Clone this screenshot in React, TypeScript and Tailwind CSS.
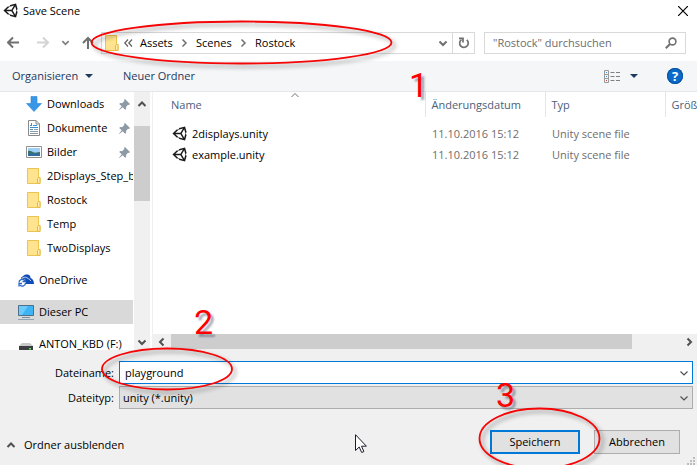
import type { ReactNode } from "react";

type IconProps = { className?: string };

function UnityIcon({ className }: IconProps) {
  return (
    <svg viewBox="0 0 512 512" className={className} fill="#1a1a1a" aria-hidden="true">
      <path d="M498.11 206.4L445.31 14.72 248.2 66.08 219 116.14l-59.2-.43L15.54 256 159.82 396.32l59.17-.43 29.24 50 197.08 51.36 52.8-191.62-30-49.63zM223.77 124.2L374.55 86.51 288 232.33H114.87zm0 263.63L114.87 279.71H288l86.55 145.81zm193 14L330.17 256l86.58-145.84L458.56 256z" />
    </svg>
  );
}

type Direction = "up" | "down" | "left" | "right";

const chevronPaths: Record<Direction, string> = {
  up: "M1.5 7 5 3.5 8.5 7",
  down: "M1.5 3.5 5 7 8.5 3.5",
  left: "M6.5 1.5 3 5 6.5 8.5",
  right: "M3.5 1.5 7 5 3.5 8.5",
};

function Chevron({ dir, size = 10, color = "#505050", weight = 2 }: { dir: Direction; size?: number; color?: string; weight?: number }) {
  return (
    <svg viewBox="0 0 10 10" width={size} height={size} fill="none" stroke={color} strokeWidth={weight} className="shrink-0" aria-hidden="true">
      <path d={chevronPaths[dir]} />
    </svg>
  );
}

function Arrow({ dir, color }: { dir: "left" | "right" | "up"; color: string }) {
  const d = {
    left: "M12 6.5H1M6 1.5 1 6.5l5 5",
    right: "M0 6.5h11M6 1.5l5 5-5 5",
    up: "M6 13V2M1 7l5-5 5 5",
  }[dir];
  return (
    <svg viewBox="0 0 12 13" width="12" height="13" fill="none" stroke={color} strokeWidth="2" aria-hidden="true">
      <path d={d} />
    </svg>
  );
}

function FolderIcon() {
  return (
    <svg viewBox="0 0 14 16" width="14" height="16" className="shrink-0" aria-hidden="true">
      <path d="M.5.5h11v9h1.500v6H.5z" fill="#ffe38f" stroke="#ecc44c" />
      <path d="M10.500 15.500v-5l1-1h1.500v6z" fill="#ffe9a6" stroke="#e8b93c" />
    </svg>
  );
}

function DownloadIcon() {
  return (
    <svg viewBox="0 0 16 16" width="16" height="16" aria-hidden="true">
      <path d="M5 .5h6v7h4.500L8 15.500.5 7.500H5z" fill="#3a97e8" stroke="#2a83d6" strokeWidth=".6" />
    </svg>
  );
}

function DocumentIcon() {
  return (
    <svg viewBox="0 0 14 16" width="14" height="16" aria-hidden="true">
      <path d="M1.500.5h7.500l3.500 3.500v11.500h-11z" fill="#fff" stroke="#8a8a8a" />
      <path d="M9 .5V4h3.500" fill="none" stroke="#8a8a8a" />
      <path d="M3 5.500h2M4.500 3v3M6 5.500h4M3 7.500h8M3 9.500h3" stroke="#3a8fd0" />
      <path d="M7 9.500h4M3 11.500h8M3 13.500h8" stroke="#8c9aa6" />
    </svg>
  );
}

function PictureIcon() {
  return (
    <svg viewBox="0 0 16 12" width="16" height="12" aria-hidden="true">
      <path d="M.5.5h15v11H.5z" fill="#fff" stroke="#8f8f8f" />
      <path d="M2 2h12v8H2z" fill="#9fd0f5" />
      <path d="M2 5c3-1 4 1 6 1.500S12 6 14 6v2H2z" fill="#3b7268" />
      <path d="M2 7.500h12V10H2z" fill="#2f6da0" />
    </svg>
  );
}

function OneDriveIcon() {
  return (
    <svg viewBox="0 0 16 13" width="16" height="13" className="shrink-0" aria-hidden="true">
      <path d="M3 4.500c0-1.500 1-2 2-2C6 .5 9 0 11 1c1 .5 1.500 1.500 1.500 3 2 .5 3.500 3 3.500 6H8L7 5z" fill="#0f4cb5" />
      <path d="M4 4.500C6 2.500 9 3 10.500 5c1 0 2 1 2 2" fill="none" stroke="#fff" strokeWidth=".8" />
      <path d="M1 8.500C1 5.500 4.500 4.500 7 6.500M7.500 4.500v3h-3" fill="none" stroke="#2a66c4" strokeWidth="1.300" />
      <path d="M7.500 9c0 3-3.500 4-5.500 2.300M1 12.500v-3h3" fill="none" stroke="#2a66c4" strokeWidth="1.300" />
    </svg>
  );
}

function ComputerIcon() {
  return (
    <svg viewBox="0 0 16 15" width="16" height="15" aria-hidden="true">
      <path d="M.5.5h15v10H.5z" fill="#3fb4f5" stroke="#4d6f88" />
      <path d="M1 1h9l-6 9H1z" fill="#6cc9fb" />
      <path d="M4 12.500h8" stroke="#7c8f9d" />
      <path d="M0 14.500h16" stroke="#8ea3b3" />
    </svg>
  );
}

function DriveIcon() {
  return (
    <svg viewBox="0 0 14 16" width="14" height="16" aria-hidden="true">
      <path d="M3 7h8l3 3H0z" fill="#c9c9c9" />
      <path d="M0 10h14v6H0z" fill="#3c3f41" />
      <path d="M10 12h2v1.500h-2z" fill="#4fe34f" />
    </svg>
  );
}

function PinIcon() {
  return (
    <svg viewBox="0 0 11 11" width="11" height="11" className="shrink-0" aria-hidden="true">
      <path d="M6 0l5 5-1 1-1-.3L7 8l.2 2-1 .8-2.500-2.500L.3 11 0 10.700l2.700-3.400L.3 5l.8-1 2 .2L5.400 2 5 1z" fill="#8d9aa6" />
    </svg>
  );
}

type Place = { label: string; icon: ReactNode; pinned?: boolean };

const quickAccess: Place[] = [
  { label: "Downloads", icon: <DownloadIcon />, pinned: true },
  { label: "Dokumente", icon: <DocumentIcon />, pinned: true },
  { label: "Bilder", icon: <PictureIcon />, pinned: true },
  { label: "2Displays_Step_b", icon: <FolderIcon /> },
  { label: "Rostock", icon: <FolderIcon /> },
  { label: "Temp", icon: <FolderIcon /> },
  { label: "TwoDisplays", icon: <FolderIcon /> },
];

const roots: Place[] = [
  { label: "OneDrive", icon: <OneDriveIcon /> },
  { label: "Dieser PC", icon: <ComputerIcon /> },
  { label: "ANTON_KBD (F:)", icon: <DriveIcon /> },
];

const files = [
  { name: "2displays.unity", date: "11.10.2016 15:12", type: "Unity scene file" },
  { name: "example.unity", date: "11.10.2016 15:12", type: "Unity scene file" },
];

function TitleBar() {
  return (
    <header className="flex h-[21px] items-center pr-2 pl-[3px]">
      <UnityIcon className="size-[15px]" />
      <h1 className="ml-[5px] flex-1">Save Scene</h1>
      <button type="button" aria-label="Schließen" className="p-px">
        <svg viewBox="0 0 10 10" width="10" height="10" stroke="#000" strokeWidth="1.200" aria-hidden="true">
          <path d="M0 0l10 10M10 0L0 10" />
        </svg>
      </button>
    </header>
  );
}

function AddressRow() {
  return (
    <div className="flex h-10 items-center pt-[3px] pr-[11px] pl-[7px]">
      <button type="button" aria-label="Zurück"><Arrow dir="left" color="#707070" /></button>
      <button type="button" aria-label="Vorwärts" className="ml-[18px]"><Arrow dir="right" color="#d4d4d4" /></button>
      <button type="button" aria-label="Verlauf" className="ml-3"><Chevron dir="down" size={9} color="#808080" /></button>
      <button type="button" aria-label="Nach oben" className="ml-3"><Arrow dir="up" color="#707070" /></button>
      <nav aria-label="Pfad" className="ml-[7px] flex h-[22px] min-w-0 flex-1 items-stretch border border-[#d9d9d9]">
        <div className="flex flex-1 items-center pl-[3px]">
          <FolderIcon />
          <span className="ml-[5px] flex w-[9px]">
            <svg viewBox="0 0 9 8" width="9" height="8" fill="none" stroke="#606060" strokeWidth="1.200" aria-hidden="true">
              <path d="M4 .5.800 4 4 7.500M8 .5 4.800 4 8 7.500" />
            </svg>
          </span>
          <button type="button" className="ml-[7px] w-[36px] text-left">Assets</button>
          <span className="ml-[3px] flex"><Chevron dir="right" color="#707070" weight={1.5} /></span>
          <button type="button" className="ml-[7px] w-[39px] text-left">Scenes</button>
          <span className="ml-[3px] flex"><Chevron dir="right" color="#707070" weight={1.5} /></span>
          <button type="button" className="ml-[7px] text-left">Rostock</button>
        </div>
        <button type="button" aria-label="Vorherige Orte" className="flex w-[18px] items-center justify-center"><Chevron dir="down" color="#707070" /></button>
        <button type="button" aria-label="Aktualisieren" className="flex w-[22px] items-center justify-center border-l border-[#d9d9d9]">
          <svg viewBox="0 0 12 12" width="12" height="12" fill="none" stroke="#707070" strokeWidth="1.700" aria-hidden="true">
            <path d="M3.500 2.600A4.300 4.300 0 1 0 8.800 2.900" />
            <path d="M1 1.400h4v4" />
          </svg>
        </button>
      </nav>
      <label className="ml-[9px] flex h-[22px] w-[202px] items-center border border-[#d9d9d9] pr-2 pl-2">
        <input type="search" aria-label="Suchen" placeholder={'"Rostock" durchsuchen'} className="min-w-0 flex-1 outline-none placeholder:text-[#6d6d6d]" />
        <svg viewBox="0 0 12 12" width="12" height="12" fill="none" stroke="#707070" aria-hidden="true">
          <circle cx="7.500" cy="4.500" r="3.400" strokeWidth="1.600" />
          <path d="M5 7 .8 11.200" strokeWidth="2" />
        </svg>
      </label>
    </div>
  );
}

function Toolbar() {
  return (
    <div className="flex h-[31px] items-center border-b border-[#e5e6e8] bg-[#f5f6f7] pr-3.5 pl-3 text-[#1e395b]">
      <button type="button" className="flex items-center">
        <span className="w-[73px] text-left">Organisieren</span>
        <svg viewBox="0 0 8 4" width="8" height="4" fill="#1e395b" aria-hidden="true"><path d="M0 0h8L4 4z" /></svg>
      </button>
      <button type="button" className="ml-[30px]">Neuer Ordner</button>
      <div className="flex-1" />
      <button type="button" aria-label="Ansicht ändern" className="flex items-center gap-[9px]">
        <svg viewBox="0 0 17 13" width="17" height="13" fill="none" aria-hidden="true">
          <path d="M.5.5h4v12h-4zM.5 4.500h4M.5 8.500h4" stroke="#9a9a9a" />
          <path d="M2 2.500h1M2 6.500h1" stroke="#3f8fd8" />
          <path d="M2 10.500h1" stroke="#d04040" />
          <path d="M6.500 2.500h4m1.500 0h4M6.500 6.500h4m1.500 0h4M6.500 10.500h4m1.500 0h4" stroke="#808080" />
        </svg>
        <svg viewBox="0 0 8 4" width="8" height="4" fill="#1e395b" aria-hidden="true"><path d="M0 0h8L4 4z" /></svg>
      </button>
      <button type="button" aria-label="Hilfe" className="ml-[29px] flex size-4 items-center justify-center rounded-full bg-[#0a6ac9] text-[13px] leading-4 font-bold text-white ring-1 ring-[#0b4f9b] ring-inset">?</button>
    </div>
  );
}

function PlaceRow({ place, nested, selected }: { place: Place; nested?: boolean; selected?: boolean }) {
  return (
    <li className={selected ? "bg-[#d9d9d9]" : ""}>
      <a href="#" className={`flex h-6 items-center overflow-hidden ${nested ? "pl-[26px]" : "pl-[18px]"}`}>
        <span className="flex w-4 shrink-0 justify-center">{place.icon}</span>
        <span className="ml-[5px] flex-1 whitespace-nowrap">{place.label}</span>
        {place.pinned && <span className="mr-[3px]"><PinIcon /></span>}
      </a>
    </li>
  );
}

function Sidebar() {
  return (
    <aside className="flex w-[153px] shrink-0 border-r border-[#f0f0f0] pr-0.5">
      <nav aria-label="Ordner" className="min-w-0 flex-1 overflow-hidden">
        <ul>
          {quickAccess.map((place) => <PlaceRow key={place.label} place={place} nested />)}
        </ul>
        <ul className="flex flex-col gap-2 pt-2">
          {roots.map((place) => <PlaceRow key={place.label} place={place} selected={place.label === "Dieser PC"} />)}
        </ul>
      </nav>
      <div className="ml-px flex w-4 flex-col items-center bg-[#f0f0f0]">
        <div className="flex h-[34px] items-center pb-2.5"><Chevron dir="up" /></div>
        <div className="h-[75px] w-full bg-[#cdcdcd]" />
        <div className="flex-1" />
        <div className="flex h-[17px] items-center"><Chevron dir="down" /></div>
      </div>
    </aside>
  );
}

function FileList() {
  return (
    <main className="flex min-w-0 flex-1 flex-col">
      <div className="min-h-0 flex-1 overflow-hidden pl-3">
        <table className="w-[620px] table-fixed border-collapse text-left text-[#6d6d6d]">
          <thead>
            <tr className="h-[25px] text-[#4c607a]">
              <th className="relative w-[260px] border-r border-[#e5e5e5] pl-1.5 font-normal">
                Name
                <span className="absolute top-0 left-1/2 -translate-x-1/2 -translate-y-0.5"><Chevron dir="up" color="#707070" weight={1} /></span>
              </th>
              <th className="w-[120px] border-r border-[#e5e5e5] pl-1.5 font-normal">Änderungsdatum</th>
              <th className="w-[120px] border-r border-[#e5e5e5] pl-1.5 font-normal">Typ</th>
              <th className="pl-1.5 font-normal">Größe</th>
            </tr>
          </thead>
          <tbody>
            <tr className="h-1.5" aria-hidden="true"><td colSpan={4} /></tr>
            {files.map((file) => (
              <tr key={file.name} className="h-[21px]">
                <td className="p-0 pl-[7px] text-black">
                  <span className="flex items-center gap-[5px]">
                    <UnityIcon className="size-[15px]" />
                    {file.name}
                  </span>
                </td>
                <td className="p-0 pl-[7px]">{file.date}</td>
                <td className="p-0 pl-[7px]">{file.type}</td>
                <td />
              </tr>
            ))}
          </tbody>
        </table>
      </div>
      <div className="flex h-[15px] items-center bg-[#f0f0f0] pr-[3px]">
        <div className="flex w-[18px] justify-center"><Chevron dir="left" /></div>
        <div className="h-full w-[461px] bg-[#cdcdcd]" />
        <div className="flex-1" />
        <Chevron dir="right" />
      </div>
      <div className="h-px bg-[#f0f0f0]" />
    </main>
  );
}

function SavePanel() {
  return (
    <form className="bg-[#f0f0f0] pt-[11px]" onSubmit={(event) => event.preventDefault()}>
      <div className="flex items-center pr-1">
        <label htmlFor="file-name" className="w-[114px] text-right">Dateiname:</label>
        <div className="ml-[5px] flex h-[23px] flex-1 items-center border border-[#0078d7] bg-white pr-[3px] pl-[5px]">
          <input id="file-name" defaultValue="playground" className="min-w-0 flex-1 outline-none" />
          <button type="button" aria-label="Vorherige Namen" className="flex"><Chevron dir="down" weight={1.2} /></button>
        </div>
      </div>
      <div className="mt-0.5 flex items-center pr-1">
        <label htmlFor="file-type" className="w-[114px] text-right">Dateityp:</label>
        <div className="ml-[5px] grid h-[23px] flex-1 items-center border border-[#adadad] bg-[#e1e1e1]">
          <select id="file-type" className="col-start-1 row-start-1 w-full appearance-none pl-[3px] outline-none">
            <option>unity (*.unity)</option>
          </select>
          <span className="pointer-events-none col-start-1 row-start-1 mr-[3px] justify-self-end"><Chevron dir="down" weight={1.2} /></span>
        </div>
      </div>
      <div className="flex items-start pt-[21px]">
        <button type="button" className="ml-1.5 flex h-[30px] items-center gap-2"><Chevron dir="up" />Ordner ausblenden</button>
        <div className="flex-1" />
        <button type="submit" className="h-6 w-[90px] border-2 border-[#0078d7] bg-[#e1e1e1]">Speichern</button>
        <button type="button" className="ml-3.5 h-6 w-[86px] border border-[#adadad] bg-[#e1e1e1]">Abbrechen</button>
        <span className="flex h-[35px] w-[17px] items-end justify-end pr-0.5">
          <svg viewBox="0 0 8 8" width="8" height="8" fill="#bdbdbd" aria-hidden="true">
            <path d="M6 0h2v2H6zM6 3h2v2H6zM3 3h2v2H3zM6 6h2v2H6zM3 6h2v2H3zM0 6h2v2H0z" />
          </svg>
        </span>
      </div>
    </form>
  );
}

function Annotations() {
  const digit = "absolute font-[Roboto,Arial,sans-serif] text-[34px] leading-[34px] text-[#ff0000] [text-shadow:3px_3px_2px_rgba(80,90,110,0.5)]";
  return (
    <div className="pointer-events-none absolute inset-0 overflow-hidden">
      <svg className="absolute top-0 left-0 drop-shadow-[3px_3px_2px_rgba(0,0,0,0.4)]" width="697" height="465" fill="none" stroke="#f50505" strokeWidth="1.800" aria-hidden="true">
        <ellipse cx="241.500" cy="42.500" rx="150" ry="21" />
        <ellipse cx="167" cy="369" rx="65" ry="20.500" />
        <ellipse cx="539.500" cy="438.500" rx="60" ry="30" />
      </svg>
      <span className={`${digit} top-[68px] left-[409px]`}>1</span>
      <span className={`${digit} top-[305px] left-[194px]`}>2</span>
      <span className={`${digit} top-[378px] left-[496px]`}>3</span>
      <svg className="absolute top-[434px] left-[355px]" viewBox="0 0 12 19" width="12" height="19" fill="#fff" stroke="#1c1c2c" aria-hidden="true">
        <path d="M.5.700v15.800l3.700-3.500 2.500 5.500 2.200-1-2.400-5.300h4.900z" />
      </svg>
    </div>
  );
}

export default function App() {
  return (
    <div className="relative flex h-screen flex-col overflow-hidden bg-white font-['Open_Sans','Noto_Sans',sans-serif] text-[11px] leading-4 text-black">
      <TitleBar />
      <AddressRow />
      <Toolbar />
      <div className="flex min-h-0 flex-1">
        <Sidebar />
        <FileList />
      </div>
      <SavePanel />
      <Annotations />
    </div>
  );
}
